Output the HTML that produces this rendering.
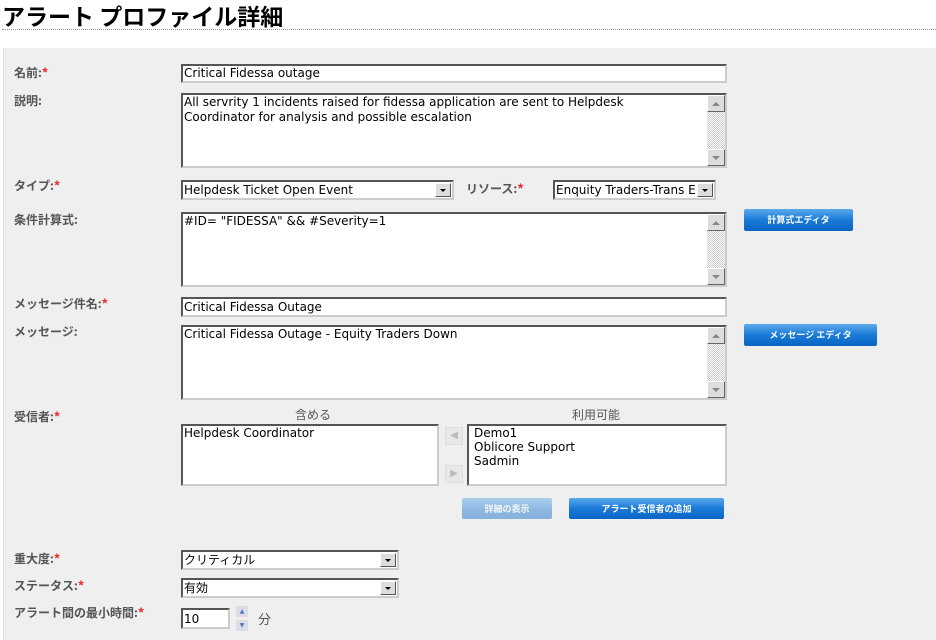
<!DOCTYPE html>
<html><head><meta charset="utf-8"><style>
*{box-sizing:border-box}
body{margin:0;width:936px;height:640px;background:#fff;font-family:"DejaVu Sans","Noto Sans CJK JP",sans-serif;position:relative;overflow:hidden}
h1{position:absolute;left:2px;top:0;margin:0;font-size:23px;font-weight:bold;color:#000;font-family:"Noto Sans CJK JP",sans-serif;line-height:30px}
.hr{position:absolute;left:2px;top:29px;width:934px;border-top:1px dotted #999}
.panel{position:absolute;left:3px;top:48px;width:933px;height:592px;background:#efefef;border-left:1px solid #ddd}
.l{position:absolute;left:14px;font-size:12px;font-weight:bold;color:#555;font-family:"Noto Sans CJK JP",sans-serif}
.l b,.r{color:#e33}
.in{position:absolute;background:#fff;border:2px solid;border-color:#555 #ccc #ccc #555;font-size:12px;padding:0 1px;line-height:15px;color:#000;white-space:pre;font-family:"DejaVu Sans","Noto Sans CJK JP",sans-serif}
.sb{position:absolute;right:0;top:0;bottom:0;width:18px;background:repeating-conic-gradient(#ccc 0 25%,#fff 0 50%) 0 0/2px 2px}
.sb i{position:absolute;left:0;width:18px;height:17px;background:#ddd;border:1px solid;border-color:#fff #666 #666 #fff}
.sb i:after{content:"";position:absolute;left:4px;top:6px;border:4px solid transparent}
.up:after{border-bottom-color:#888!important;top:2px!important}
.dn{bottom:0}.dn:after{border-top-color:#888!important}
.sel .ar{position:absolute;right:1px;top:1px;width:16px;height:14px;background:#ddd;border:1px solid;border-color:#fff #555 #555 #fff}
.sel .ar:after{content:"";position:absolute;left:4px;top:5px;border:3px solid transparent;border-top-color:#000}
.btn{position:absolute;background:linear-gradient(#5aaaea,#1a7ad8 50%,#0a64c4);color:#fff;font-size:9px;font-weight:bold;text-align:center;border-radius:2px;font-family:"Noto Sans CJK JP",sans-serif}
.hd{position:absolute;font-size:12px;color:#555;font-family:"Noto Sans CJK JP",sans-serif}
.arw{position:absolute;width:18px;height:18px;background:#e8e8e8;border:1px solid #ddd;color:#bbb;font-size:10px;text-align:center;line-height:16px}
</style></head><body>
<h1>アラート プロファイル詳細</h1>
<div class="hr"></div>
<div class="panel"></div>

<div class="l" style="top:64px">名前:<b>*</b></div>
<div class="in" style="left:181px;top:64px;width:546px;height:19px">Critical Fidessa outage</div>

<div class="l" style="top:92px">説明:</div>
<div class="in" style="left:181px;top:93px;width:546px;height:75px">All servrity 1 incidents raised for fidessa application are sent to Helpdesk
Coordinator for analysis and possible escalation<div class="sb"><i class="up"></i><i class="dn"></i></div></div>

<div class="l" style="top:177px">タイプ:<b>*</b></div>
<div class="in sel" style="left:181px;top:180px;width:273px;height:20px;line-height:17px">Helpdesk Ticket Open Event<span class="ar"></span></div>
<div class="l" style="left:466px;top:180px">リソース:<b>*</b></div>
<div class="in sel" style="left:553px;top:180px;width:163px;height:20px;line-height:17px">Enquity Traders-Trans E<span class="ar"></span></div>

<div class="l" style="top:211px">条件計算式:</div>
<div class="in" style="left:181px;top:212px;width:546px;height:75px">#ID= "FIDESSA" &amp;&amp; #Severity=1<div class="sb"><i class="up"></i><i class="dn"></i></div></div>
<div class="btn" style="left:744px;top:209px;width:109px;height:22px;line-height:22px">計算式エディタ</div>

<div class="l" style="top:295px">メッセージ件名:<b>*</b></div>
<div class="in" style="left:181px;top:297px;width:546px;height:20px;line-height:17px">Critical Fidessa Outage</div>

<div class="l" style="top:323px">メッセージ:</div>
<div class="in" style="left:181px;top:325px;width:546px;height:75px">Critical Fidessa Outage - Equity Traders Down<div class="sb"><i class="up"></i><i class="dn"></i></div></div>
<div class="btn" style="left:744px;top:324px;width:133px;height:22px;line-height:22px">メッセージ エディタ</div>

<div class="l" style="top:408px">受信者:<b>*</b></div>
<div class="hd" style="left:295px;top:406px">含める</div>
<div class="hd" style="left:572px;top:406px">利用可能</div>
<div class="in" style="left:181px;top:424px;width:258px;height:62px;line-height:14px">Helpdesk Coordinator</div>
<div class="arw" style="left:445px;top:427px">◀</div>
<div class="arw" style="left:445px;top:465px">▶</div>
<div class="in" style="left:467px;top:424px;width:260px;height:62px;padding-left:5px;line-height:14px">Demo1
Oblicore Support
Sadmin</div>
<div class="btn" style="left:462px;top:498px;width:90px;height:21px;line-height:21px;opacity:.45">詳細の表示</div>
<div class="btn" style="left:569px;top:498px;width:155px;height:21px;line-height:21px">アラート受信者の追加</div>

<div class="l" style="top:550px">重大度:<b>*</b></div>
<div class="in sel" style="left:181px;top:550px;width:218px;height:20px;line-height:17px">クリティカル<span class="ar"></span></div>
<div class="l" style="top:577px">ステータス:<b>*</b></div>
<div class="in sel" style="left:181px;top:578px;width:218px;height:20px;line-height:17px">有効<span class="ar"></span></div>
<div class="l" style="top:604px">アラート間の最小時間:<b>*</b></div>
<div class="in" style="left:181px;top:608px;width:49px;height:21px;line-height:18px">10</div>
<div class="arw" style="left:236px;top:606px;width:12px;height:11px;font-size:6px;line-height:9px;color:#57a;background:#dde">▲</div>
<div class="arw" style="left:236px;top:620px;width:12px;height:11px;font-size:6px;line-height:9px;color:#57a;background:#dde">▼</div>
<div class="hd" style="left:258px;top:609px;font-size:13px">分</div>
</body></html>
